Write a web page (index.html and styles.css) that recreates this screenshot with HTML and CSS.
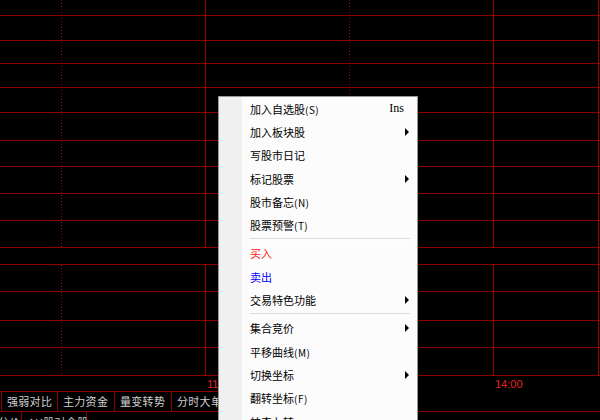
FILE: index.html
```html
<!DOCTYPE html>
<html lang="zh-CN">
<head>
<meta charset="utf-8">
<title>分时图</title>
<link rel="stylesheet" href="styles.css">
</head>
<body>
<div class="screen">
  <div class="chart">
    <svg class="grid" width="600" height="376" viewBox="0 0 600 376" shape-rendering="crispEdges">
      <g stroke="#8c0000" stroke-width="1">
        <line x1="0" y1="15.5" x2="600" y2="15.5"/>
        <line x1="0" y1="40.5" x2="600" y2="40.5"/>
        <line x1="0" y1="63.5" x2="600" y2="63.5"/>
        <line x1="0" y1="87.5" x2="600" y2="87.5"/>
        <line x1="0" y1="112.5" x2="600" y2="112.5"/>
        <line x1="0" y1="140.5" x2="600" y2="140.5"/>
        <line x1="0" y1="166.5" x2="600" y2="166.5"/>
        <line x1="0" y1="193.5" x2="600" y2="193.5"/>
        <line x1="0" y1="220.5" x2="600" y2="220.5"/>
        <line x1="0" y1="247.5" x2="600" y2="247.5"/>
        <line x1="0" y1="264.5" x2="600" y2="264.5"/>
        <line x1="0" y1="291.5" x2="600" y2="291.5"/>
        <line x1="0" y1="320.5" x2="600" y2="320.5"/>
        <line x1="0" y1="347.5" x2="600" y2="347.5"/>
        <line x1="0" y1="375.5" x2="600" y2="375.5"/>
      </g>
      <g stroke="#9a0000" stroke-width="1">
        <line x1="205.5" y1="0" x2="205.5" y2="248"/>
        <line x1="205.5" y1="264" x2="205.5" y2="376"/>
        <line x1="493.5" y1="0" x2="493.5" y2="248"/>
        <line x1="493.5" y1="264" x2="493.5" y2="376"/>
        <line x1="598.5" y1="0" x2="598.5" y2="376"/>
      </g>
      <g stroke="#a00000" stroke-width="1" stroke-dasharray="1 2">
        <line x1="61.5" y1="0" x2="61.5" y2="248"/>
        <line x1="61.5" y1="265" x2="61.5" y2="376"/>
        <line x1="349.5" y1="0" x2="349.5" y2="248"/>
        <line x1="349.5" y1="265" x2="349.5" y2="376"/>
      </g>
    </svg>
    <div class="axis">
      <span></span>
      <span class="tick">11:30</span>
      <span class="tick">14:00</span>
    </div>
  </div>

  <div class="tabs row1">
    <div class="tab stub"></div>
    <div class="tab">强弱对比</div>
    <div class="tab">主力资金</div>
    <div class="tab">量变转势</div>
    <div class="tab">分时大单</div>
  </div>
  <div class="tabs row2">
    <div class="tab t-a">分价</div>
    <div class="tab t-b">AH股对全股</div>
  </div>

  <div class="menu">
    <div class="item"><span class="label">加入自选股<span class="key">(S)</span></span><span class="shortcut">Ins</span></div>
    <div class="item"><span class="label">加入板块股</span><span class="arrow"></span></div>
    <div class="item"><span class="label">写股市日记</span></div>
    <div class="item"><span class="label">标记股票</span><span class="arrow"></span></div>
    <div class="item"><span class="label">股市备忘<span class="key">(N)</span></span></div>
    <div class="item"><span class="label">股票预警<span class="key">(T)</span></span></div>
    <div class="sep"></div>
    <div class="item buy"><span class="label">买入</span></div>
    <div class="item sell"><span class="label">卖出</span></div>
    <div class="item"><span class="label">交易特色功能</span><span class="arrow"></span></div>
    <div class="sep"></div>
    <div class="item"><span class="label">集合竞价</span><span class="arrow"></span></div>
    <div class="item"><span class="label">平移曲线<span class="key">(M)</span></span></div>
    <div class="item"><span class="label">切换坐标</span><span class="arrow"></span></div>
    <div class="item"><span class="label">翻转坐标<span class="key">(F)</span></span></div>
    <div class="item"><span class="label">神奇九转</span></div>
  </div>
</div>
</body>
</html>
```

FILE: styles.css
```css
* { box-sizing: border-box; }

html, body {
  margin: 0;
  padding: 0;
  background: #000;
}

.screen {
  position: relative;
  width: 600px;
  height: 420px;
  overflow: hidden;
  background: #000;
  font-family: "Noto Sans CJK SC", "Noto Sans", sans-serif;
}

.chart {
  display: flex;
  flex-direction: column;
}

.grid {
  display: block;
}

.axis {
  display: grid;
  grid-template-columns: 207px 288px 1fr;
  height: 15px;
}

.tick {
  font-family: "Liberation Sans", Arial, sans-serif;
  font-size: 11px;
  line-height: 14px;
  color: #e02424;
  padding-top: 1px;
}

.tabs {
  display: flex;
  border-bottom: 1px solid #8c0000;
}

.row1 {
  height: 21px;
}

.tab {
  height: 20px;
  border-top: 1px solid #8c0000;
  border-right: 1px solid #8c0000;
  color: #d0d0d0;
  font-size: 11px;
  line-height: 18px;
  letter-spacing: 0.3px;
  white-space: nowrap;
  width: 57px;
  padding-left: 5px;
}

.row1 .tab:nth-child(2) { width: 56px; }

.tab.stub {
  width: 2px;
  padding: 0;
}

.row2 {
  border-bottom: none;
}

.row2 .tab {
  border-top: none;
  line-height: 16px;
  padding-top: 2px;
}

.t-a { width: 24px; padding-left: 0; margin-left: -2px; }
.t-b { width: 65px; padding-left: 6px; }

/* context menu overlay */
.menu {
  position: absolute;
  left: 218px;
  top: 96px;
  width: 200px;
  height: 340px;
  border: 1px solid #979797;
  background: linear-gradient(to right, #f0f0f0 0, #f0f0f0 23px, #fcfcfc 23px);
  padding-top: 0;
}

.item {
  display: flex;
  align-items: center;
  height: 23.3px;
  padding-left: 31px;
  padding-right: 8px;
  font-size: 11px;
  color: #000;
}

.label {
  flex: 1;
  white-space: nowrap;
}

.key {
  font-size: 10px;
  letter-spacing: 0.5px;
}

.shortcut {
  font-family: "Liberation Serif", "Times New Roman", serif;
  font-size: 12px;
  margin-right: 5px;
}

.arrow {
  width: 0;
  height: 0;
  border-left: 4px solid #000;
  border-top: 4px solid transparent;
  border-bottom: 4px solid transparent;
}

.buy { color: #ff2222; }
.sell { color: #0000ff; }

.sep {
  height: 5px;
  margin: 0 7px 0 31px;
  padding-top: 1px;
}

.sep::before {
  content: "";
  display: block;
  height: 2px;
  border-top: 1px solid #dcdcdc;
  border-bottom: 1px solid #ffffff;
}
```
